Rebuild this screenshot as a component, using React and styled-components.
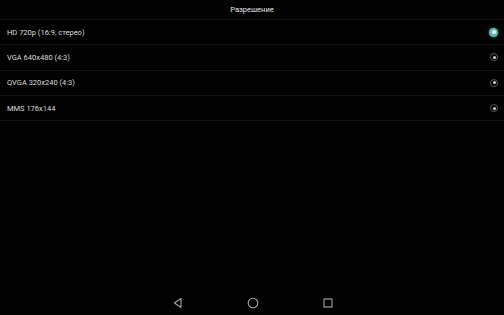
import React, { useState } from 'react';
import styled, { createGlobalStyle } from 'styled-components';

const Global = createGlobalStyle`
    html, body { margin: 0; padding: 0; background: #000; }
    body { font-family: Roboto, "Noto Sans", sans-serif; }
`;

const Screen = styled.div`
    width: 504px;
    height: 315px;
    background: #020202;
    display: flex;
    flex-direction: column;
    overflow: hidden;
`;

const Title = styled.div`
    height: 20px;
    display: flex;
    align-items: center;
    justify-content: center;
    color: #e6e6e6;
    font-size: 7.5px;
    border-bottom: 1px solid #151515;
    box-sizing: border-box;
    padding-bottom: 1px;
`;

const List = styled.div`
    display: flex;
    flex-direction: column;
    flex: 1;
`;

const Row = styled.div`
    height: 25.3px;
    box-sizing: border-box;
    display: flex;
    align-items: center;
    justify-content: space-between;
    padding: 0 6px 0 7px;
    border-bottom: 1px solid #151515;
    color: #dcdcdc;
    font-size: 7.5px;
`;

const Radio = styled.div`
    width: ${p => (p.on ? 9 : 8)}px;
    height: ${p => (p.on ? 9 : 8)}px;
    border-radius: 50%;
    box-sizing: border-box;
    display: flex;
    align-items: center;
    justify-content: center;
    background: ${p => (p.on ? '#5fb9b6' : 'transparent')};
    border: ${p => (p.on ? 'none' : '1px solid #5a5a5a')};
    box-shadow: ${p => (p.on ? '0 0 3px rgba(95,185,182,0.6)' : 'none')};
    &::after {
        content: '';
        width: ${p => (p.on ? 4 : 3)}px;
        height: ${p => (p.on ? 4 : 3)}px;
        border-radius: 50%;
        background: ${p => (p.on ? '#e8f6f6' : '#d0d0d0')};
    }
`;

const NavBar = styled.div`
    height: 24px;
    display: flex;
    justify-content: center;
    align-items: center;
    gap: 61px;
    padding-left: 1px;
`;

const NavBtn = styled.svg`
    width: 14px;
    height: 14px;
    stroke: #a8a8a8;
    stroke-width: 1.1;
    fill: none;
`;

const options = [
    'HD 720p (16:9, стерео)',
    'VGA 640x480 (4:3)',
    'QVGA 320x240 (4:3)',
    'MMS 176x144',
];

const App = () => {
    const [sel, setSel] = useState(0);

    return <Screen>
        <Global />
        <Title>Разрешение</Title>
        <List>
            {options.map((o, i) =>
                <Row key={o} onClick={() => setSel(i)}>
                    <span>{o}</span>
                    <Radio on={sel === i} />
                </Row>
            )}
        </List>
        <NavBar>
            <NavBtn viewBox="0 0 14 14"><path d="M10 2.5 L3.5 7 L10 11.5 Z" strokeLinejoin="round" /></NavBtn>
            <NavBtn viewBox="0 0 14 14"><circle cx="7" cy="7" r="4.8" /></NavBtn>
            <NavBtn viewBox="0 0 14 14"><rect x="3" y="3" width="8" height="8" /></NavBtn>
        </NavBar>
    </Screen>
}

export default App;
